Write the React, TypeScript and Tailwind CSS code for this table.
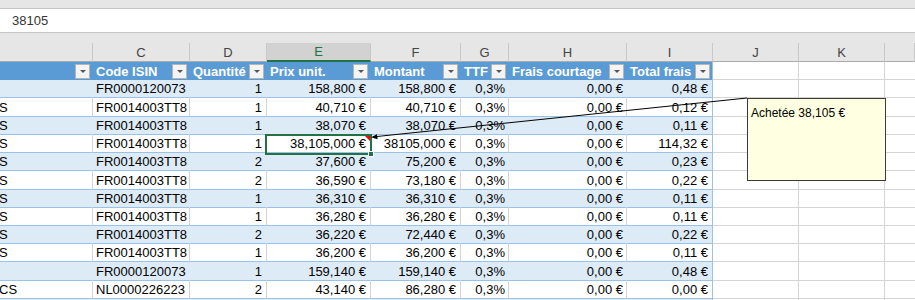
import React from "react";

type Row = { b: string; c: string; d: string; e: string; f: string; i: string; h: string };

const rows: Row[] = [
  { b: "", c: "FR0000120073", d: "1", e: "158,800 €", f: "158,800 €", i: "0,48 €", h: "h-[18px]" },
  { b: "S", c: "FR0014003TT8", d: "1", e: "40,710 €", f: "40,710 €", i: "0,12 €", h: "h-[19px]" },
  { b: "S", c: "FR0014003TT8", d: "1", e: "38,070 €", f: "38,070 €", i: "0,11 €", h: "h-[18px]" },
  { b: "S", c: "FR0014003TT8", d: "1", e: "38,105,000 €", f: "38105,000 €", i: "114,32 €", h: "h-[18px]" },
  { b: "S", c: "FR0014003TT8", d: "2", e: "37,600 €", f: "75,200 €", i: "0,23 €", h: "h-[18px]" },
  { b: "S", c: "FR0014003TT8", d: "2", e: "36,590 €", f: "73,180 €", i: "0,22 €", h: "h-[19px]" },
  { b: "S", c: "FR0014003TT8", d: "1", e: "36,310 €", f: "36,310 €", i: "0,11 €", h: "h-[18px]" },
  { b: "S", c: "FR0014003TT8", d: "1", e: "36,280 €", f: "36,280 €", i: "0,11 €", h: "h-[18px]" },
  { b: "S", c: "FR0014003TT8", d: "2", e: "36,220 €", f: "72,440 €", i: "0,22 €", h: "h-[18px]" },
  { b: "S", c: "FR0014003TT8", d: "1", e: "36,200 €", f: "36,200 €", i: "0,11 €", h: "h-[18px]" },
  { b: "", c: "FR0000120073", d: "1", e: "159,140 €", f: "159,140 €", i: "0,48 €", h: "h-[19px]" },
  { b: "CS", c: "NL0000226223", d: "2", e: "43,140 €", f: "86,280 €", i: "0,00 €", h: "h-[18px]" },
  { b: "", c: "", d: "", e: "", f: "", i: "", h: "h-[18px]" },
];

const GRID = "grid grid-cols-[93px_97px_77px_104px_90px_48px_118px_86px_86px_86px_1fr]";

function Filter() {
  return (
    <div className="shrink-0 mr-[2px] w-[15px] h-[15px] bg-[#f4f4f4] border border-[#b4b4b4] flex items-center justify-center">
      <div className="w-0 h-0 border-l-[3px] border-r-[3px] border-t-[3px] border-l-transparent border-r-transparent border-t-[#555555]" />
    </div>
  );
}

function HeadCell({ label, last }: { label: string; last?: boolean }) {
  return (
    <div
      className={
        "h-full flex items-center bg-[#5b9bd5] " +
        (last ? "border-r border-r-[#9bc2e6]" : "border-r border-r-[#5b9bd5]")
      }
    >
      <div className="flex-1 overflow-hidden whitespace-nowrap pl-[3px] text-white font-bold text-[13px] leading-[15px] pt-[1px]">
        {label}
      </div>
      <Filter />
    </div>
  );
}

function ColHead({ label, selected }: { label: string; selected?: boolean }) {
  return (
    <div
      className={
        "h-full flex items-center justify-center text-[13px] leading-[15px] border-r border-r-[#c8c8c8] " +
        (selected
          ? "bg-[#d2d2d2] text-[#217346] border-b-2 border-b-[#217346]"
          : "bg-[#e6e6e6] text-[#444444] border-b border-b-[#ababab]")
      }
    >
      {label}
    </div>
  );
}

function Cell({
  text,
  blue,
  align,
  last,
  extra,
}: {
  text: string;
  blue: boolean;
  align: "l" | "r";
  last?: boolean;
  extra?: string;
}) {
  const bg = blue ? "bg-[#ddebf7]" : "bg-white";
  const br = last ? "border-r-[#9bc2e6]" : blue ? "border-r-[#ddebf7]" : "border-r-[#d4d4d4]";
  const al = align === "r" ? "justify-end pr-[4px]" : "justify-start pl-[3px]";
  return (
    <div
      className={`h-full flex items-end overflow-hidden whitespace-nowrap border-r border-b border-b-[#9bc2e6] ${bg} ${br} ${al} ${extra ?? ""}`}
    >
      <span className="text-[13px] leading-[15px] pb-[1px] text-black">{text}</span>
    </div>
  );
}

function Blank() {
  return <div className="h-full bg-white border-r border-b border-r-[#d4d4d4] border-b-[#d4d4d4]" />;
}

export default function App() {
  return (
    <div className="relative w-[915px] h-[300px] overflow-hidden bg-white font-['Liberation_Sans',Arial,sans-serif]">
      {/* formula bar */}
      <div className="h-[43px] bg-[#e6e6e6] pt-[8px]">
        <div className="h-[25px] bg-white border-y border-[#c6c6c6] flex items-center pl-[12px] text-[13px] text-[#333333]">
          38105
        </div>
      </div>

      {/* column letters */}
      <div className={`${GRID} h-[19px]`}>
        <ColHead label="" />
        <ColHead label="C" />
        <ColHead label="D" />
        <ColHead label="E" selected />
        <ColHead label="F" />
        <ColHead label="G" />
        <ColHead label="H" />
        <ColHead label="I" />
        <ColHead label="J" />
        <ColHead label="K" />
        <ColHead label="" />
      </div>

      {/* table header */}
      <div className={`${GRID} h-[18px]`}>
        <HeadCell label="" />
        <HeadCell label="Code ISIN" />
        <HeadCell label="Quantité" />
        <HeadCell label="Prix unit." />
        <HeadCell label="Montant" />
        <HeadCell label="TTF" />
        <HeadCell label="Frais courtage" />
        <HeadCell label="Total frais" last />
        <div className="h-full bg-white border-r border-b border-r-[#d4d4d4] border-b-[#d4d4d4]" />
        <div className="h-full bg-white border-r border-b border-r-[#d4d4d4] border-b-[#d4d4d4]" />
        <div className="h-full bg-white border-b border-b-[#d4d4d4]" />
      </div>

      {/* rows */}
      {rows.map((r, idx) => {
        const blue = idx % 2 === 0;
        const filled = r.c !== "";
        return (
          <div key={idx} className={`${GRID} ${r.h}`}>
            <div
              className={`h-full flex items-end overflow-hidden whitespace-nowrap border-r border-b border-b-[#9bc2e6] ${
                blue ? "bg-[#ddebf7] border-r-[#ddebf7]" : "bg-white border-r-[#d4d4d4]"
              }`}
            >
              <span className="text-[13px] leading-[15px] pb-[1px] text-black ml-[-1px]">{r.b}</span>
            </div>
            <Cell text={r.c} blue={blue} align="l" />
            <Cell text={r.d} blue={blue} align="r" />
            <Cell text={r.e} blue={blue} align="r" />
            <Cell text={r.f} blue={blue} align="r" />
            <Cell text={filled ? "0,3%" : ""} blue={blue} align="r" extra="!pr-[3px]" />
            <Cell text={filled ? "0,00 €" : ""} blue={blue} align="r" extra="!pr-[3px]" />
            <Cell text={r.i} blue={blue} align="r" last />
            <Blank />
            <Blank />
            <div className="h-full bg-white border-b border-b-[#d4d4d4]" />
          </div>
        );
      })}

      {/* active cell E4 */}
      <div className="absolute left-[265px] top-[134px] w-[107px] h-[21px] border-2 border-[#217346]" />
      <div className="absolute left-[368px] top-[151px] w-[6px] h-[6px] bg-[#217346] border border-white" />
      {/* comment indicator */}
      <div className="absolute left-[365px] top-[136px] w-0 h-0 border-t-[5px] border-l-[5px] border-t-[#ff0000] border-l-transparent" />

      {/* comment arrow */}
      <svg className="absolute left-0 top-0" width="915" height="300" viewBox="0 0 915 300">
        <line x1="376" y1="136.6" x2="747" y2="98" stroke="#000" strokeWidth="1" />
        <polygon points="371,137.2 377,134.2 377.6,139.2" fill="#000" />
      </svg>

      {/* comment box */}
      <div className="absolute left-[747px] top-[98px] w-[139px] h-[83px] bg-[#ffffe1] border border-[#3a3a3a] pl-[3px] pt-[1px]">
        <span className="text-[12px] leading-[14px] text-black">Achetée 38,105 €</span>
      </div>
    </div>
  );
}
